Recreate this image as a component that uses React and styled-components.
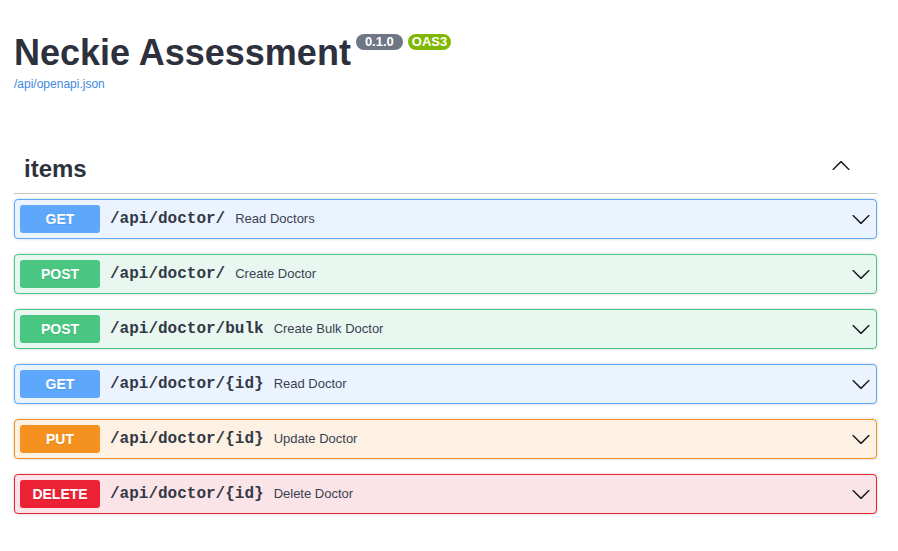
import React from 'react'
import styled, { createGlobalStyle } from 'styled-components'

const GlobalStyle = createGlobalStyle`
  body {
    margin: 0;
    background: #fff;
    font-family: 'Liberation Sans', Arial, sans-serif;
    color: #3b4151;
  }
`

const methods = {
  GET: { main: '#5ea8fc', bg: '#ebf4fe' },
  POST: { main: '#49c682', bg: '#e8f7ef' },
  PUT: { main: '#f5921f', bg: '#fdf1e3' },
  DELETE: { main: '#ec2234', bg: '#fae4e7' }
}

const operations = [
  { method: 'GET', path: '/api/doctor/', summary: 'Read Doctors' },
  { method: 'POST', path: '/api/doctor/', summary: 'Create Doctor' },
  { method: 'POST', path: '/api/doctor/bulk', summary: 'Create Bulk Doctor' },
  { method: 'GET', path: '/api/doctor/{id}', summary: 'Read Doctor' },
  { method: 'PUT', path: '/api/doctor/{id}', summary: 'Update Doctor' },
  { method: 'DELETE', path: '/api/doctor/{id}', summary: 'Delete Doctor' }
]

const Wrapper = styled.div`
  padding: 32px 21px 40px 14px;
`
const Info = styled.div`
  margin-bottom: 53px;
`
const TitleRow = styled.div`
  display: flex;
  align-items: flex-start;
`
const Title = styled.h2`
  margin: 0;
  font-size: 36px;
  line-height: 41px;
  font-weight: 700;
  color: #2c313d;
`
const Badge = styled.span`
  margin: 2px 0 0 5px;
  padding: 0 ${({ pad }) => pad}px;
  height: 16px;
  line-height: 16px;
  border-radius: 10px;
  background: ${({ color }) => color};
  color: #fff;
  font-size: 13px;
  font-weight: 700;
`
const SpecLink = styled.a`
  display: inline-block;
  margin-top: 4px;
  font-size: 12px;
  color: #4287e0;
  text-decoration: none;
`
const TagHeader = styled.div`
  display: flex;
  align-items: center;
  justify-content: space-between;
  padding: 10px 26px 10px 10px;
  margin-bottom: 5px;
  border-bottom: 1px solid #c4c5c8;
`
const TagTitle = styled.h3`
  margin: 0;
  font-size: 24px;
  line-height: 28px;
  font-weight: 700;
  color: #2c313d;
`
const Arrow = styled.svg`
  width: 20px;
  height: 20px;
  flex-shrink: 0;
  fill: #1b1b1b;
  margin-bottom: ${({ up }) => (up ? '8px' : '0')};
`
const OpList = styled.div`
  display: flex;
  flex-direction: column;
  gap: 15px;
`
const Opblock = styled.div`
  display: flex;
  align-items: center;
  padding: 5px;
  border: 1px solid ${({ method }) => methods[method].main};
  border-radius: 4px;
  background: ${({ method }) => methods[method].bg};
  box-shadow: 0 0 3px rgba(0, 0, 0, 0.19);
`
const Method = styled.span`
  min-width: 80px;
  padding: 6px 0;
  border-radius: 3px;
  background: ${({ method }) => methods[method].main};
  color: #fff;
  font-size: 14px;
  line-height: 16px;
  font-weight: 700;
  text-align: center;
  text-shadow: 0 1px 0 rgba(0, 0, 0, 0.1);
`
const Path = styled.span`
  padding: 0 10px;
  font-family: 'Liberation Mono', 'Courier New', monospace;
  font-size: 16px;
  font-weight: 700;
  color: #333846;
`
const Summary = styled.span`
  flex: 1;
  font-size: 13px;
  line-height: 15px;
  margin-bottom: 2px;
  color: #3b4151;
`

const ChevronDown = () => (
  <Arrow viewBox="0 0 20 20">
    <path d="M17.418 6.109c.272-.268.709-.268.979 0s.271.701 0 .969l-7.908 7.83c-.27.268-.707.268-.979 0l-7.908-7.83c-.27-.268-.27-.701 0-.969.271-.268.709-.268.979 0L10 13.25l7.418-7.141z" />
  </Arrow>
)

const ChevronUp = () => (
  <Arrow up viewBox="0 0 20 20">
    <path d="M17.418 14.908c.272.268.709.268.979 0s.271-.701 0-.969l-7.908-7.83c-.27-.268-.707-.268-.979 0l-7.908 7.83c-.27.268-.27.701 0 .969.271.268.709.268.979 0L10 7.767l7.418 7.141z" />
  </Arrow>
)

export default function App() {
  return (
    <Wrapper>
      <GlobalStyle />
      <Info>
        <TitleRow>
          <Title>Neckie Assessment</Title>
          <Badge color="#6f7685" pad={9}>0.1.0</Badge>
          <Badge color="#80b800" pad={4}>OAS3</Badge>
        </TitleRow>
        <SpecLink href="#">/api/openapi.json</SpecLink>
      </Info>
      <TagHeader>
        <TagTitle>items</TagTitle>
        <ChevronUp />
      </TagHeader>
      <OpList>
        {operations.map((op, i) => (
          <Opblock key={i} method={op.method}>
            <Method method={op.method}>{op.method}</Method>
            <Path>{op.path}</Path>
            <Summary>{op.summary}</Summary>
            <ChevronDown />
          </Opblock>
        ))}
      </OpList>
    </Wrapper>
  )
}
